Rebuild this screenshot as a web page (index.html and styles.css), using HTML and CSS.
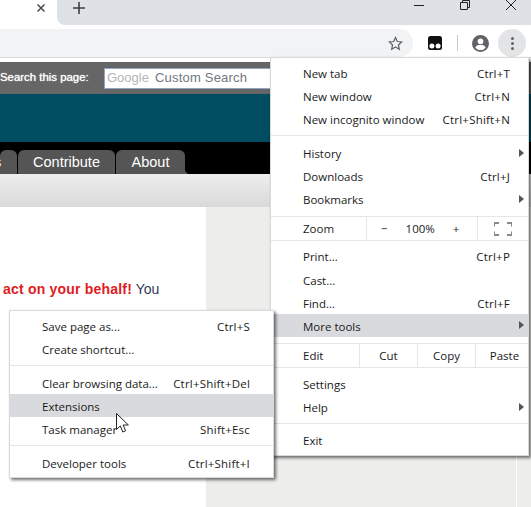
FILE: index.html
```html
<!DOCTYPE html>
<html lang="en">
<head>
    <meta charset="UTF-8">
    <title>Chrome menu - More tools</title>
    <link rel="stylesheet" href="styles.css">
</head>
<body>
    <div class="tabstrip">
        <div class="active-tab">
            <svg class="tab-close" width="8" height="8" viewBox="0 0 8 8"><path d="M.5.500l7 7M7.500.500l-7 7" stroke="#45494d" stroke-width="1.500"/></svg>
        </div>
        <div class="strip-rest">
            <svg class="new-tab" width="12" height="12" viewBox="0 0 12 12"><path d="M6 0v12M0 6h12" stroke="#3c4043" stroke-width="1.600"/></svg>
            <div class="window-controls">
                <svg width="10" height="10" viewBox="0 0 10 10"><path d="M0 5.500h10" stroke="#222" stroke-width="1"/></svg>
                <svg width="10" height="10" viewBox="0 0 10 10"><path d="M.5 2.500h7v7h-7zM2.500 2.500v-2h7v7h-2" fill="none" stroke="#222" stroke-width="1"/></svg>
                <svg width="10" height="10" viewBox="0 0 10 10"><path d="M0 0l10 10M10 0L0 10" stroke="#222" stroke-width="1"/></svg>
            </div>
        </div>
    </div>

    <div class="toolbar">
        <div class="omnibox">
            <svg width="15" height="15" viewBox="0 0 24 24"><path d="M12 2.500l2.900 6.300 6.900.8-5.100 4.700 1.400 6.800-6.100-3.400-6.100 3.400 1.400-6.800-5.100-4.700 6.900-.8z" fill="none" stroke="#5f6368" stroke-width="2"/></svg>
        </div>
        <svg class="ext-icon" width="14" height="14" viewBox="0 0 14 14"><rect width="14" height="14" rx="2.500" fill="#111"/><circle cx="3.900" cy="10" r="2.500" fill="#fff"/><circle cx="10.100" cy="10" r="2.500" fill="#fff"/></svg>
        <div class="toolbar-divider"></div>
        <svg class="avatar" width="17" height="17" viewBox="0 0 18 18"><circle cx="9" cy="9" r="9" fill="#5f6368"/><circle cx="9" cy="6.600" r="3" fill="#fff"/><path d="M3.400 13.200c1.200-2 3.400-2.800 5.600-2.800s4.400.8 5.600 2.800c-1.300 1.700-3.300 2.700-5.600 2.700s-4.300-1-5.600-2.700z" fill="#fff"/></svg>
        <div class="dots-button"><span></span><span></span><span></span></div>
    </div>

    <div class="page">
        <div class="search-bar">
            <span class="search-label">Search this page:</span>
            <div class="search-box"><span class="google">Google</span><span class="custom">Custom Search</span></div>
        </div>
        <div class="banner"></div>
        <div class="nav">
            <div class="nav-tab clipped">s</div>
            <div class="nav-tab contribute">Contribute</div>
            <div class="nav-tab about">About</div>
        </div>
        <div class="subnav"></div>
        <div class="columns">
            <div class="content">
                <p><strong>act on your behalf!</strong> You</p>
            </div>
            <div class="sidebar"></div>
            <div class="far-side"></div>
        </div>
    </div>

    <div class="menu main-menu">
        <div class="item"><span>New tab</span><span>Ctrl+T</span></div>
        <div class="item"><span>New window</span><span>Ctrl+N</span></div>
        <div class="item"><span>New incognito window</span><span>Ctrl+Shift+N</span></div>
        <div class="sep wide"></div>
        <div class="item arrow"><span>History</span></div>
        <div class="item"><span>Downloads</span><span>Ctrl+J</span></div>
        <div class="item arrow"><span>Bookmarks</span></div>
        <div class="sep above-row"></div>
        <div class="row">
            <div class="row-label">Zoom</div>
            <div class="zoom-controls"><span>&minus;</span><span>100%</span><span>+</span></div>
            <div class="fullscreen">
                <svg width="18" height="14" viewBox="0 0 18 14"><path d="M0 4.500V1h5M13 1h5v3.500M18 9.500V13h-5M5 13H0V9.500" fill="none" stroke="#8a8a8a" stroke-width="2"/></svg>
            </div>
        </div>
        <div class="sep under-zoom"></div>
        <div class="item"><span>Print...</span><span>Ctrl+P</span></div>
        <div class="item nudge"><span>Cast...</span></div>
        <div class="item nudge"><span>Find...</span><span>Ctrl+F</span></div>
        <div class="item arrow hover nudge"><span>More tools</span></div>
        <div class="sep above-edit"></div>
        <div class="row">
            <div class="row-label edit-label">Edit</div>
            <div class="edit-button">Cut</div>
            <div class="edit-button">Copy</div>
            <div class="edit-button">Paste</div>
        </div>
        <div class="sep under-edit"></div>
        <div class="item"><span>Settings</span></div>
        <div class="item arrow"><span>Help</span></div>
        <div class="sep"></div>
        <div class="item"><span>Exit</span></div>
    </div>

    <div class="menu sub-menu">
        <div class="item"><span>Save page as...</span><span>Ctrl+S</span></div>
        <div class="item"><span>Create shortcut...</span></div>
        <div class="sep"></div>
        <div class="item nudge"><span>Clear browsing data...</span><span>Ctrl+Shift+Del</span></div>
        <div class="item hover nudge"><span>Extensions</span></div>
        <div class="item nudge"><span>Task manager</span><span>Shift+Esc</span></div>
        <div class="sep low"></div>
        <div class="item"><span>Developer tools</span><span>Ctrl+Shift+I</span></div>
    </div>

    <svg class="cursor" width="14" height="22" viewBox="0 0 14 22"><path d="M.5.500v16l3.800-3.500 2.500 6 2.800-1.200-2.500-5.800h5.300z" fill="#fff" stroke="#222" stroke-width="1"/></svg>
</body>
</html>
```

FILE: styles.css
```css
html, body {
    margin: 0;
    height: 507px;
    overflow: hidden;
    background: #fff;
}
body {
    position: relative;
    font-family: 'Open Sans', sans-serif;
}

/* browser chrome */
.tabstrip {
    display: flex;
    height: 25px;
    background: #fff;
}
.active-tab {
    width: 57px;
    flex: none;
    padding: 4px 0 0 37px;
    box-sizing: border-box;
}
.tab-close {
    display: block;
}
.strip-rest {
    flex: 1;
    display: flex;
    align-items: flex-start;
    background: #dee1e6;
    border-bottom-left-radius: 8px;
    padding: 2px 0 0 16px;
}
.new-tab {
    display: block;
}
.window-controls {
    margin: -2px 0 0 auto;
    display: flex;
    gap: 36px;
    padding-right: 15px;
}
.toolbar {
    display: flex;
    align-items: center;
    height: 33px;
    padding-top: 4px;
    box-sizing: border-box;
    border-bottom: 1px solid #dadce0;
}
.omnibox {
    width: 413px;
    height: 28px;
    flex: none;
    box-sizing: border-box;
    display: flex;
    align-items: center;
    justify-content: flex-end;
    padding-right: 10px;
    background: #f1f3f4;
    border-radius: 0 14px 14px 0;
}
.ext-icon {
    margin-left: 15px;
}
.toolbar-divider {
    width: 1px;
    height: 16px;
    margin-left: 15px;
    background: #c8cacc;
}
.avatar {
    margin-left: 14px;
}
.dots-button {
    width: 28px;
    height: 28px;
    margin-left: 9px;
    border-radius: 50%;
    background: #e3e4e5;
    display: flex;
    flex-direction: column;
    align-items: center;
    justify-content: center;
    gap: 2px;
}
.dots-button span {
    width: 3px;
    height: 3px;
    border-radius: 50%;
    background: #5f6368;
}

/* the web page underneath */
.page {
    padding-top: 4px;
    font-family: 'Liberation Sans', Arial, sans-serif;
}
.search-bar {
    height: 32px;
    display: flex;
    align-items: center;
    background: #666;
}
.search-label {
    width: 104px;
    flex: none;
    padding-bottom: 2px;
    color: #fff;
    font-size: 11.400px;
    text-shadow: 0 0 1px #fff;
}
.search-box {
    width: 200px;
    height: 21px;
    box-sizing: border-box;
    border: 1px solid #8fa7c0;
    background: #fff;
    display: flex;
    align-items: center;
    padding: 0 0 2px 2px;
}
.google {
    color: #b5b5b5;
    font-size: 13px;
    width: 48px;
}
.custom {
    color: #6f7780;
    font-size: 13px;
    letter-spacing: .2px;
}
.banner {
    height: 48px;
    background: #004c60;
}
.nav {
    height: 32px;
    background: #000;
    display: flex;
    align-items: flex-end;
    gap: 1px;
}
.nav-tab {
    position: relative;
    height: 24px;
    box-sizing: border-box;
    background: #555;
    border-radius: 6px 6px 0 0;
    color: #fff;
    font-size: 14.500px;
    line-height: 24px;
    text-align: center;
}
.clipped {
    width: 17px;
    overflow: hidden;
    text-align: left;
    text-indent: -6px;
}
.contribute {
    width: 97px;
}
.about {
    width: 69px;
}
.about::after {
    content: "";
    position: absolute;
    left: 100%;
    bottom: 0;
    border-bottom: 3px solid #555;
    border-right: 3px solid transparent;
}
.subnav {
    height: 33px;
    background: linear-gradient(#eee, #d9d9d9);
}
.columns {
    display: flex;
    height: 300px;
}
.content {
    width: 206px;
    flex: none;
    background: #fff;
}
.content p {
    margin: 74px 0 0 3px;
    white-space: nowrap;
    color: #333a56;
    font-size: 14px;
    line-height: 16px;
}
.content strong {
    color: #e01b24;
    letter-spacing: .2px;
}
.sidebar {
    width: 310px;
    flex: none;
    background: #ededec;
}
.far-side {
    flex: 1;
    border-left: 1px solid #fff;
    background: #ededec;
}

/* menus */
.menu {
    position: absolute;
    box-sizing: border-box;
    background: #fff;
    border: 1px solid #d9d9d9;
    box-shadow: 2px 2px 3px rgba(0, 0, 0, .55);
    font-size: 11.500px;
    color: #1a1a1a;
    padding-top: 4px;
}
.main-menu {
    left: 270px;
    top: 57px;
    width: 259px;
    height: 399px;
}
.sub-menu {
    left: 9px;
    top: 310px;
    width: 265px;
    height: 168px;
}
.item {
    position: relative;
    height: 23px;
    box-sizing: border-box;
    display: flex;
    align-items: center;
    justify-content: space-between;
    padding: 0 18px 0 32px;
    white-space: nowrap;
}
.item span + span {
    letter-spacing: .2px;
}
.sub-menu .item {
    padding-right: 23px;
}
.item.nudge {
    padding-top: 2px;
}
.hover {
    background: #d9dade;
}
.arrow::after {
    content: "";
    position: absolute;
    right: 4px;
    top: 7px;
    border-left: 5px solid #555;
    border-top: 4px solid transparent;
    border-bottom: 4px solid transparent;
}
.sep {
    height: 1px;
    margin: 4px 0 5px;
    background: #e6e6e6;
}
.sep.wide {
    margin: 4px 0 6px;
}
.sep.low {
    margin: 5px 0 6px;
}
.sep.above-row {
    margin: 5px 0 0;
}
.sep.under-zoom {
    margin: 0 0 4px;
}
.sep.above-edit {
    margin: 6px 0 0;
}
.sep.under-edit {
    margin: 0 0 5px;
}
.row {
    height: 23px;
    display: flex;
    align-items: center;
}
.row-label {
    width: 95px;
    flex: none;
    padding-left: 32px;
    box-sizing: border-box;
}
.edit-label {
    width: 88px;
}
.zoom-controls {
    width: 112px;
    flex: none;
    align-self: stretch;
    display: flex;
    align-items: center;
    gap: 18px;
    box-sizing: border-box;
    border-left: 1px solid #e6e6e6;
    border-right: 1px solid #e6e6e6;
    padding-left: 14px;
}
.fullscreen {
    flex: 1;
    display: flex;
    justify-content: center;
}
.edit-button {
    width: 58px;
    flex: none;
    align-self: stretch;
    display: flex;
    align-items: center;
    justify-content: center;
    box-sizing: border-box;
    border-left: 1px solid #e6e6e6;
}

.cursor {
    position: absolute;
    left: 116px;
    top: 413px;
}
```
